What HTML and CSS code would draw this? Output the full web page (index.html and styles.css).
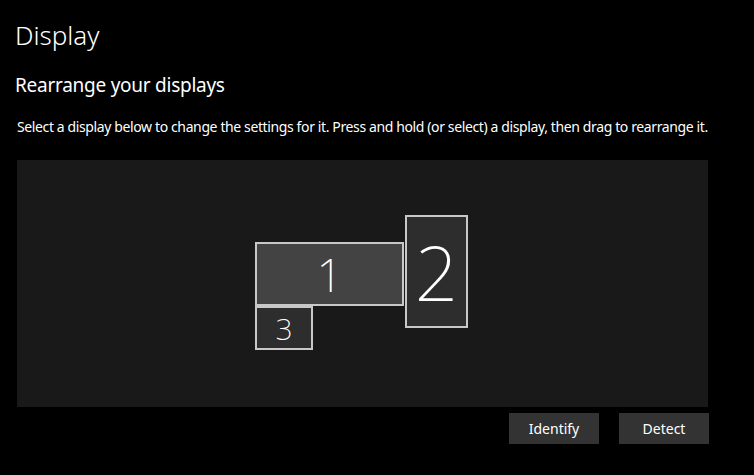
FILE: index.html
```html
<!DOCTYPE html>
<html lang="en">
<head>
    <meta charset="UTF-8">
    <meta name="viewport" content="width=device-width, initial-scale=1.0">
    <title>Display</title>
    <link rel="stylesheet" href="styles.css">
</head>
<body>

    <div class="page">
        <h1 class="title">Display</h1>
        <h2 class="subtitle">Rearrange your displays</h2>
        <p class="hint">Select a display below to change the settings for it. Press and hold (or select) a display, then drag to rearrange it.</p>

        <div class="arrange">
            <div class="monitor monitor-1 selected">1</div>
            <div class="monitor monitor-2">2</div>
            <div class="monitor monitor-3">3</div>
        </div>

        <div class="actions">
            <button type="button">Identify</button>
            <button type="button">Detect</button>
        </div>
    </div>

</body>
</html>
```

FILE: styles.css
```css
body {
    margin: 0;
    background-color: #000;
    color: #fff;
    font-family: "Noto Sans", "Open Sans", sans-serif;
}
.page {
    padding: 17px 46px 0 17px;
}
.title {
    margin: 0 0 0 -2px;
    font-size: 26px;
    font-weight: 300;
    line-height: 36px;
}
.subtitle {
    margin: 18px 0 0 -2px;
    font-size: 19px;
    font-weight: 400;
    line-height: 28px;
    letter-spacing: -0.26px;
}
.hint {
    margin: 18px 0 0 0;
    font-size: 14px;
    line-height: 20px;
    letter-spacing: -0.38px;
    white-space: nowrap;
}
.arrange {
    position: relative;
    height: 247px;
    margin-top: 23px;
    background-color: #191919;
}
.monitor {
    position: absolute;
    box-sizing: border-box;
    border: 2px solid #c8c8c8;
    background-color: #2d2d2d;
    display: flex;
    align-items: center;
    justify-content: center;
    font-weight: 200;
}
.monitor.selected {
    background-color: #434343;
}
.monitor-1 {
    left: 238px;
    top: 82px;
    width: 149px;
    height: 64px;
    font-size: 46px;
}
.monitor-2 {
    left: 388px;
    top: 55px;
    width: 63px;
    height: 113px;
    font-size: 76px;
}
.monitor-3 {
    left: 238px;
    top: 146px;
    width: 58px;
    height: 44px;
    font-size: 30px;
}
.actions {
    display: flex;
    justify-content: flex-end;
    gap: 20px;
    margin-top: 6px;
    margin-right: -1px;
}
.actions button {
    width: 90px;
    height: 31px;
    border: none;
    background-color: #333;
    color: #fff;
    font-family: inherit;
    font-size: 14px;
}
```
